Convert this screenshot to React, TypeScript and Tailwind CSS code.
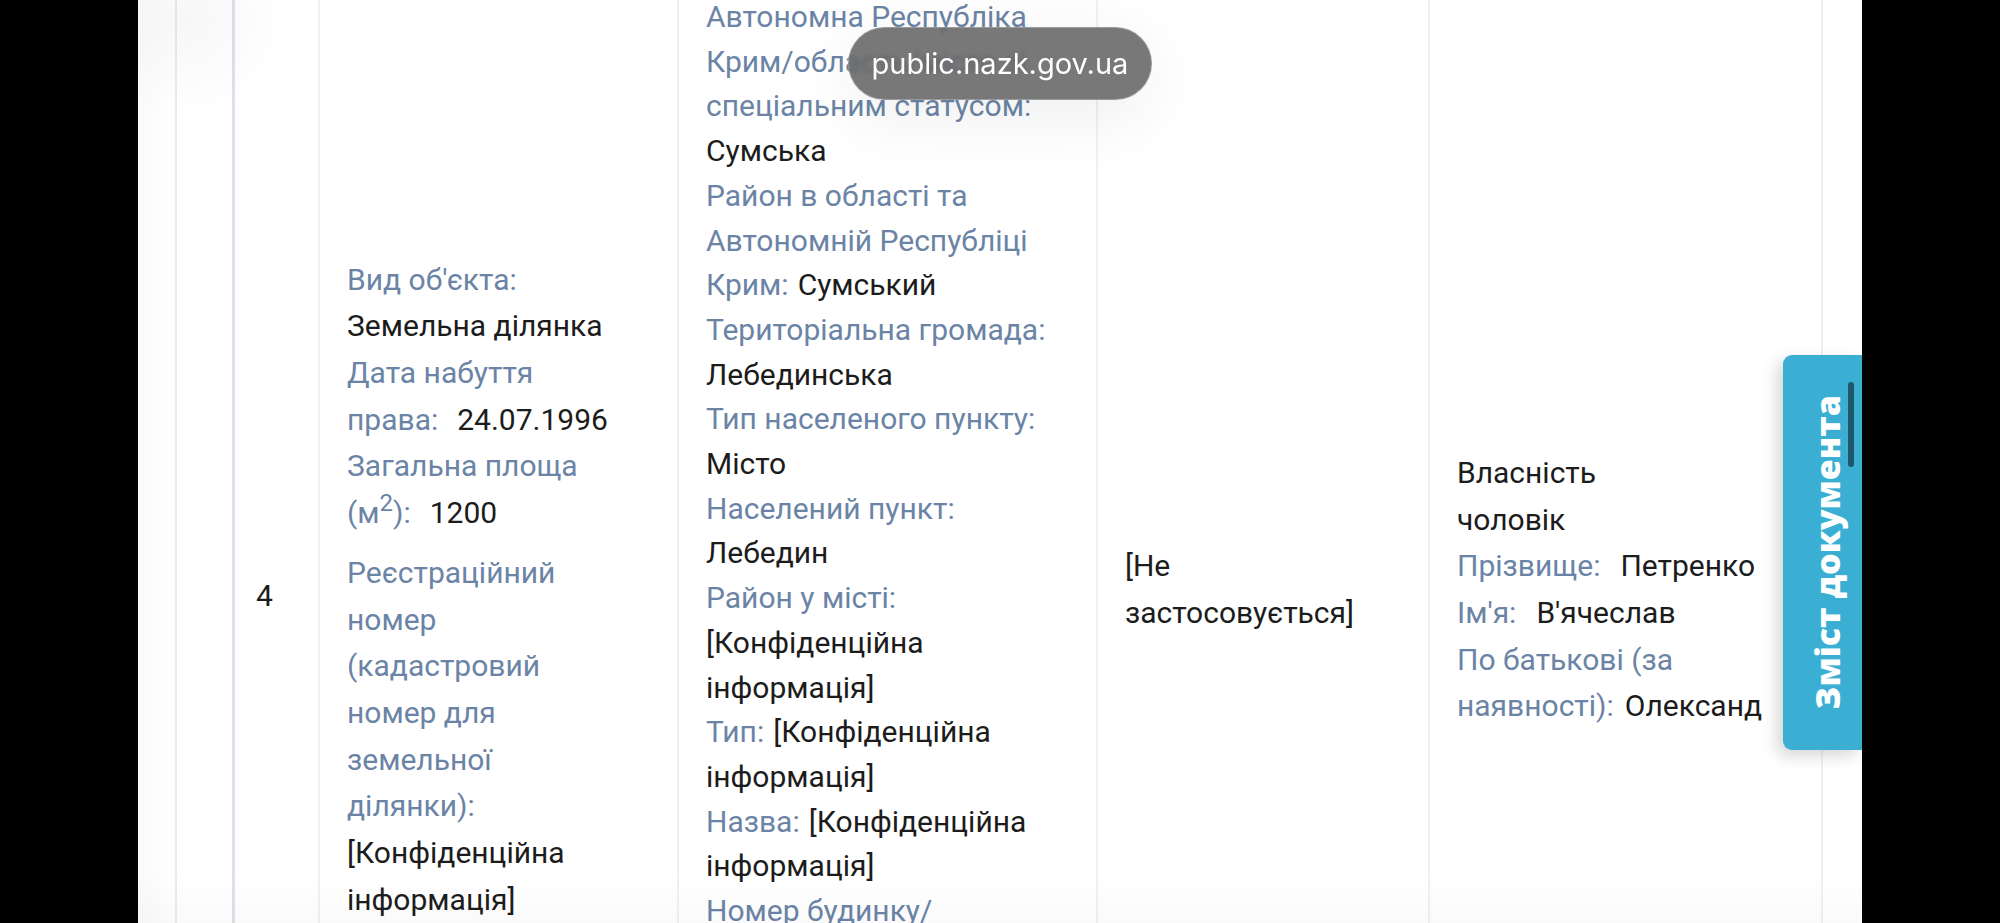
import React from 'react'

const lab = 'text-[#6b84a6]'
const val = 'text-[#1c1c1c]'

function Line({ children, className = '' }: { children: React.ReactNode; className?: string }) {
  return <div className={`whitespace-nowrap ${className}`}>{children}</div>
}

function Pair({ l, v, gap = 'ml-[19px]', className = '' }: { l: React.ReactNode; v: string; gap?: string; className?: string }) {
  return (
    <Line className={className}>
      <span className={lab}>{l}</span>
      <span className={`${val} ${gap}`}>{v}</span>
    </Line>
  )
}

export default function App() {
  return (
    <div
      className="relative flex h-[923px] w-[2000px] overflow-hidden bg-black text-[30px]"
      style={{ fontFamily: 'Roboto, "Noto Sans", sans-serif' }}
    >
      <div className="w-[138px] shrink-0" />

      {/* page */}
      <div className="relative w-[1724px] shrink-0 overflow-hidden bg-white">
        {/* faint shadow blobs */}
        <div className="absolute left-[-40px] top-[-90px] h-[220px] w-[180px] rounded-full bg-[radial-gradient(circle,rgba(0,0,0,0.03),transparent_70%)]" />
        <div className="absolute bottom-0 left-0 h-[50px] w-full bg-gradient-to-b from-transparent to-black/[0.02]" />

        <div className="flex h-full">
          <div className="w-[37px] shrink-0 bg-gradient-to-r from-[#f9fafb] to-white" />
          <div className="w-[2px] shrink-0 bg-[#e6ebf2]" />
          <div className="w-[55px] shrink-0" />

          {/* table, scrolled */}
          <div className="-mt-[40px] grid h-[1260px] shrink-0 grid-cols-[86px_359px_419px_332px_395px] leading-[46.7px]">
            <div className="flex items-center border-l-[3px] border-[#dde2ea] pl-[21px] pt-[12px]">
              <span className={val}>4</span>
            </div>

            <div className="flex items-center border-l-2 border-[#eef0f3] pl-[27px]">
              <div>
                <Line className={lab}>Вид об'єкта:</Line>
                <Line className={val}>Земельна ділянка</Line>
                <Line className={lab}>Дата набуття</Line>
                <Pair l="права:" v="24.07.1996" />
                <Line className={lab}>Загальна площа</Line>
                <Pair
                  className="mb-[13px]"
                  l={
                    <>
                      (м<sup className="text-[24px]">2</sup>):
                    </>
                  }
                  v="1200"
                />
                <Line className={lab}>Реєстраційний</Line>
                <Line className={lab}>номер</Line>
                <Line className={lab}>(кадастровий</Line>
                <Line className={lab}>номер для</Line>
                <Line className={lab}>земельної</Line>
                <Line className={lab}>ділянки):</Line>
                <Line className={val}>[Конфіденційна</Line>
                <Line className={val}>інформація]</Line>
              </div>
            </div>

            <div className="border-l-2 border-[#eef0f3] pl-[27px] pt-[35px] leading-[44.7px]">
              <Line className={lab}>Автономна Республіка</Line>
              <Line className={lab}>Крим/область/місто зі</Line>
              <Line className={lab}>спеціальним статусом:</Line>
              <Line className={val}>Сумська</Line>
              <Line className={lab}>Район в області та</Line>
              <Line className={lab}>Автономній Республіці</Line>
              <Pair l="Крим:" v="Сумський" gap="ml-[9px]" />
              <Line className={lab}>Територіальна громада:</Line>
              <Line className={val}>Лебединська</Line>
              <Line className={lab}>Тип населеного пункту:</Line>
              <Line className={val}>Місто</Line>
              <Line className={lab}>Населений пункт:</Line>
              <Line className={val}>Лебедин</Line>
              <Line className={lab}>Район у місті:</Line>
              <Line className={val}>[Конфіденційна</Line>
              <Line className={val}>інформація]</Line>
              <Pair l="Тип:" v="[Конфіденційна" gap="ml-[9px]" />
              <Line className={val}>інформація]</Line>
              <Pair l="Назва:" v="[Конфіденційна" gap="ml-[9px]" />
              <Line className={val}>інформація]</Line>
              <Line className={lab}>Номер будинку/</Line>
            </div>

            <div className="flex items-center border-l-2 border-[#eef0f3] pl-[27px]">
              <div>
                <Line className={val}>[Не</Line>
                <Line className={val}>застосовується]</Line>
              </div>
            </div>

            <div className="flex items-center border-x-2 border-[#eef0f3] pl-[27px]">
              <div>
                <Line className={val}>Власність</Line>
                <Line className={val}>чоловік</Line>
                <Pair l="Прізвище:" v="Петренко" gap="ml-[20px]" />
                <Pair l="Ім'я:" v="В'ячеслав" gap="ml-[20px]" />
                <Line className={lab}>По батькові (за</Line>
                <Pair l="наявності):" v="Олександрович" gap="ml-[11px]" />
              </div>
            </div>
          </div>
        </div>

        {/* side tab */}
        <div className="absolute left-[1625px] top-[355px] h-[395px] w-[20px] bg-white" />
        <div className="absolute left-[1645px] top-[355px] flex h-[395px] w-[79px] items-center justify-center rounded-l-[9px] bg-[#3aafd3] pl-[9px] shadow-[-6px_6px_16px_rgba(0,0,0,0.16)]">
          <span
            className="rotate-180 whitespace-nowrap text-[34px] font-extrabold leading-none text-white [writing-mode:vertical-rl]"
            style={{ fontFamily: '"Open Sans", Roboto, sans-serif' }}
          >
            Зміст документа
          </span>
        </div>
        <div className="absolute left-[1710px] top-[382px] h-[85px] w-[6px] rounded-full bg-black/50" />
      </div>

      <div className="w-[138px] shrink-0" />

      {/* url pill */}
      <div className="absolute left-[848px] top-[27px] flex h-[73px] w-[304px] items-center justify-center rounded-full border border-white/25 bg-[#606060]/85 shadow-[0_16px_70px_rgba(0,0,0,0.07)] backdrop-blur-[2px]">
        <span className="text-[29px] text-white" style={{ fontFamily: 'Inter, Roboto, sans-serif' }}>
          public.nazk.gov.ua
        </span>
      </div>
    </div>
  )
}
